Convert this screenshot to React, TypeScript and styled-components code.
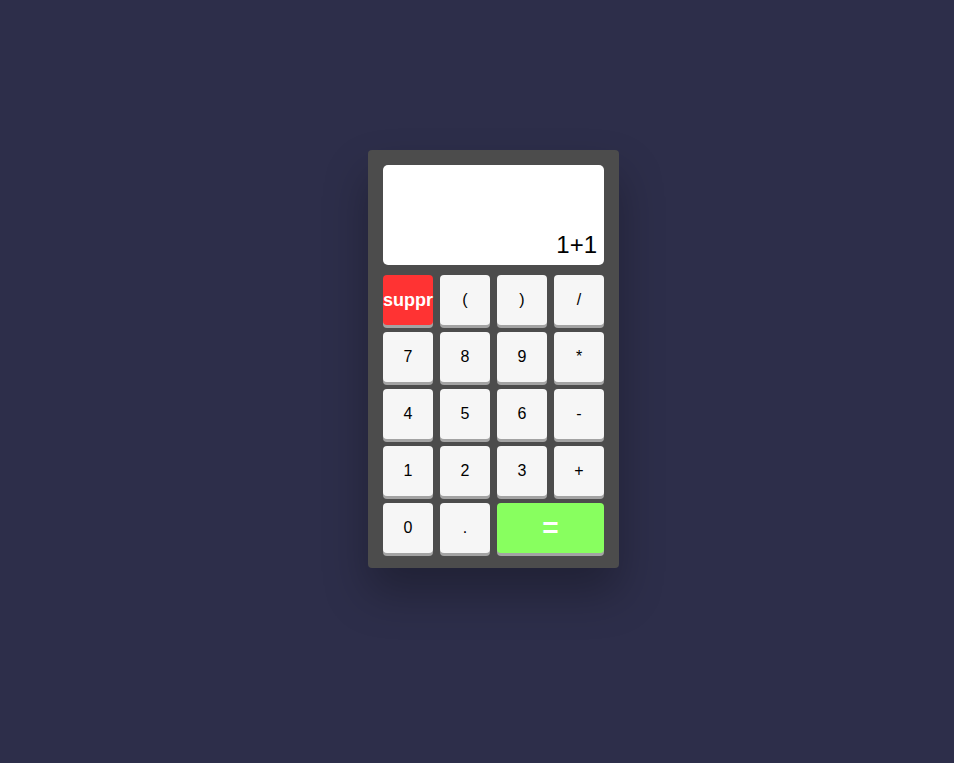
import React from "react"
import styled, { createGlobalStyle } from "styled-components"

const GlobalStyle = createGlobalStyle`
  html, body {
    margin: 0;
    padding: 0;
    background: #2d2e4a;
    font-family: "Liberation Sans", Arial, sans-serif;
  }
`

const Page = styled.div`
  min-height: 763px;
  box-sizing: border-box;
  padding: 150px 0 0 368px;
`

const Calculator = styled.div`
  width: 251px;
  box-sizing: border-box;
  padding: 15px;
  background: #4c4c4c;
  border-radius: 4px;
  box-shadow: 0 25px 45px rgba(0, 0, 0, 0.28);
`

const Display = styled.div`
  height: 100px;
  background: #ffffff;
  border-radius: 5px;
  display: flex;
  align-items: flex-end;
  justify-content: flex-end;
  padding: 0 7px 6px 0;
  box-sizing: border-box;
  font-size: 24px;
  color: #000;
  margin-bottom: 10px;
`

const Keys = styled.div`
  display: grid;
  grid-template-columns: repeat(4, 50px);
  grid-auto-rows: 50px;
  gap: 7px;
`

type Variant = "plain" | "clear" | "equals"

const Key = styled.button<{ $variant?: Variant; $wide?: boolean }>`
  border: none;
  border-radius: 4px;
  padding: 0;
  font-family: "Liberation Sans", Arial, sans-serif;
  cursor: pointer;
  box-shadow: 0 3px 0 #a3a3a3;
  grid-column: ${(p) => (p.$wide ? "span 2" : "auto")};
  background: ${(p) =>
    p.$variant === "clear" ? "#ff3333" : p.$variant === "equals" ? "#88ff5f" : "#f6f6f6"};
  color: ${(p) => (p.$variant && p.$variant !== "plain" ? "#ffffff" : "#000000")};
  font-size: ${(p) => (p.$variant === "equals" ? "28px" : p.$variant === "clear" ? "18px" : "16px")};
  font-weight: ${(p) => (p.$variant && p.$variant !== "plain" ? "bold" : "normal")};
`

type KeyDef = { label: string; variant?: Variant; wide?: boolean }

const keys: KeyDef[] = [
  { label: "suppr", variant: "clear" },
  { label: "(" },
  { label: ")" },
  { label: "/" },
  { label: "7" },
  { label: "8" },
  { label: "9" },
  { label: "*" },
  { label: "4" },
  { label: "5" },
  { label: "6" },
  { label: "-" },
  { label: "1" },
  { label: "2" },
  { label: "3" },
  { label: "+" },
  { label: "0" },
  { label: "." },
  { label: "=", variant: "equals", wide: true },
]

const App: React.FC = () => (
  <>
    <GlobalStyle />
    <Page>
      <Calculator>
        <Display>1+1</Display>
        <Keys>
          {keys.map((k) => (
            <Key key={k.label} $variant={k.variant} $wide={k.wide}>
              {k.label}
            </Key>
          ))}
        </Keys>
      </Calculator>
    </Page>
  </>
)

export default App
